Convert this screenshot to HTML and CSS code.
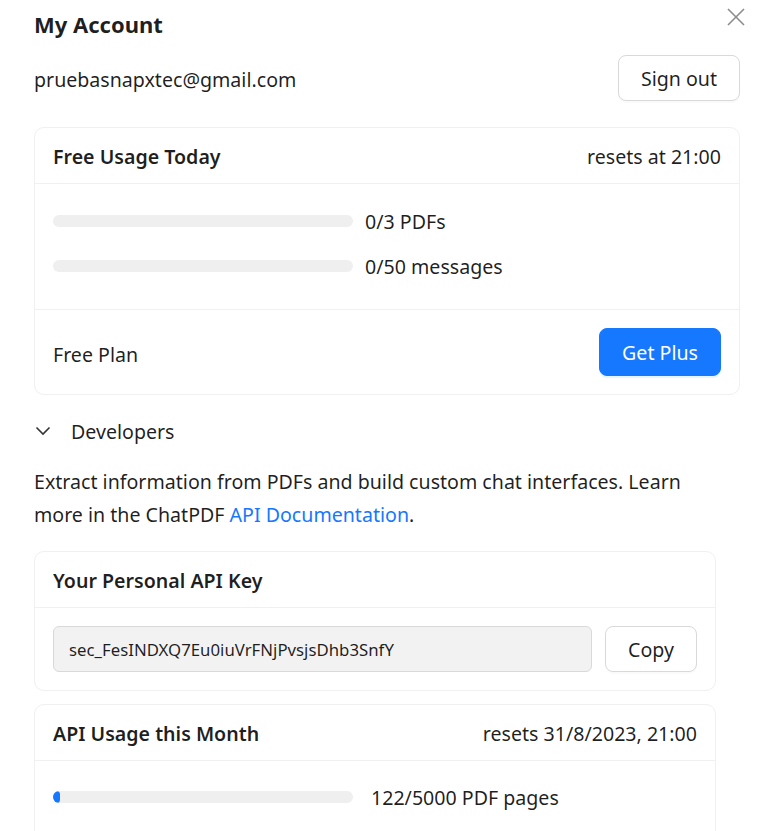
FILE: index.html
```html
<!DOCTYPE html>
<html>
<head>
<meta charset="utf-8">
<link rel="stylesheet" href="styles.css">
</head>
<body>
<div class="modal">
  <button class="close" aria-label="Close">
    <svg width="18" height="18" viewBox="0 0 18 18"><path d="M1 1L17 17M17 1L1 17" stroke="#8c8c8c" stroke-width="1.6" fill="none"/></svg>
  </button>
  <h1 class="title">My Account</h1>
  <div class="row email-row">
    <span class="email">pruebasnapxtec@gmail.com</span>
    <button class="btn">Sign out</button>
  </div>

  <section class="card">
    <div class="card-head">
      <span class="head-title">Free Usage Today</span>
      <span>resets at 21:00</span>
    </div>
    <div class="card-body usage">
      <div class="meter"><div class="bar"><div class="fill" style="width:0%"></div></div><span>0/3 PDFs</span></div>
      <div class="meter"><div class="bar"><div class="fill" style="width:0%"></div></div><span>0/50 messages</span></div>
    </div>
    <div class="card-foot">
      <span class="plan">Free Plan</span>
      <button class="btn primary">Get Plus</button>
    </div>
  </section>

  <div class="dev-toggle">
    <svg width="16" height="10" viewBox="0 0 16 10"><path d="M1.5 1.5L8 8L14.5 1.5" stroke="#333" stroke-width="1.6" fill="none"/></svg>
    <span>Developers</span>
  </div>

  <div class="dev">
    <p class="desc">Extract information from PDFs and build custom chat interfaces. Learn more in the ChatPDF <a href="#">API Documentation</a>.</p>

    <section class="card">
      <div class="card-head">
        <span class="head-title">Your Personal API Key</span>
      </div>
      <div class="card-body key-row">
        <div class="key-input">sec_FesINDXQ7Eu0iuVrFNjPvsjsDhb3SnfY</div>
        <button class="btn">Copy</button>
      </div>
    </section>

    <section class="card">
      <div class="card-head">
        <span class="head-title">API Usage this Month</span>
        <span>resets 31/8/2023, 21:00</span>
      </div>
      <div class="card-body usage api">
        <div class="meter"><div class="bar"><div class="fill" style="width:2.44%"></div></div><span>122/5000 PDF pages</span></div>
      </div>
    </section>
  </div>
</div>
</body>
</html>
```

FILE: styles.css
```css
* { box-sizing: border-box; }
html, body { margin: 0; padding: 0; background: #fff; }
body {
  font-family: "Noto Sans", "Open Sans", sans-serif;
  font-size: 19.6px;
  color: rgba(0,0,0,0.88);
}
.modal {
  position: relative;
  padding: 6px 33px 0 34px;
}
.close {
  position: absolute;
  top: 8px;
  right: 28px;
  border: 0;
  background: none;
  padding: 0;
  cursor: pointer;
}
.title {
  margin: 0;
  font-size: 22px;
  font-weight: 700;
  line-height: 36px;
}
.row, .card-head, .card-foot {
  display: flex;
  align-items: center;
  justify-content: space-between;
}
.email-row { margin-top: 12px; height: 48px; }
.email { position: relative; top: 1px; }
.btn {
  font-family: inherit;
  font-size: 19.6px;
  color: rgba(0,0,0,0.88);
  background: #fff;
  border: 1px solid #d9d9d9;
  border-radius: 8px;
  height: 46px;
  padding: 0 22px;
  box-shadow: 0 2px 0 rgba(0,0,0,0.02);
  cursor: pointer;
}
.btn.primary {
  background: #1677ff;
  border-color: #1677ff;
  color: #fff;
  height: 48px;
  box-shadow: 0 2px 0 rgba(5,145,255,0.1);
}
.card {
  border: 1px solid #f0f0f0;
  border-radius: 10px;
  margin-top: 25px;
}
.card-head {
  height: 56px;
  padding: 2px 18px 0;
  border-bottom: 1px solid #f0f0f0;
}
.head-title { font-weight: 600; }
.card-body { padding: 18px; }
.usage { padding-top: 22px; padding-bottom: 28px; display: flex; flex-direction: column; gap: 15px; }
.meter { display: flex; align-items: center; gap: 12px; height: 30px; }
.bar {
  width: 300px;
  height: 12px;
  background: #efefef;
  border-radius: 6px;
  overflow: hidden;
  flex: none;
}
.fill { height: 100%; background: #1677ff; border-radius: 6px; min-width: 0; }
.card-foot {
  padding: 18px;
  border-top: 1px solid #f0f0f0;
}
.plan { position: relative; top: 2px; }
.dev-toggle {
  display: flex;
  align-items: center;
  gap: 20px;
  margin-top: 21px;
  padding-left: 1px;
  height: 30px;
}
.dev { padding-right: 24px; }
.desc {
  margin: 19px 0 0;
  line-height: 33px;
}
.desc a { color: #1677ff; text-decoration: none; }
.dev .card { margin-top: 20px; }
.dev .card + .card { margin-top: 13px; }
.key-row { display: flex; gap: 13px; align-items: center; }
.key-input {
  flex: 1;
  height: 46px;
  background: #f2f2f2;
  border: 1px solid #d9d9d9;
  border-radius: 6px;
  padding: 0 15px;
  display: flex;
  align-items: center;
  font-size: 16.8px;
  color: rgba(0,0,0,0.88);
}
.api { padding-top: 21px; }
.api .meter { gap: 18px; }
```
